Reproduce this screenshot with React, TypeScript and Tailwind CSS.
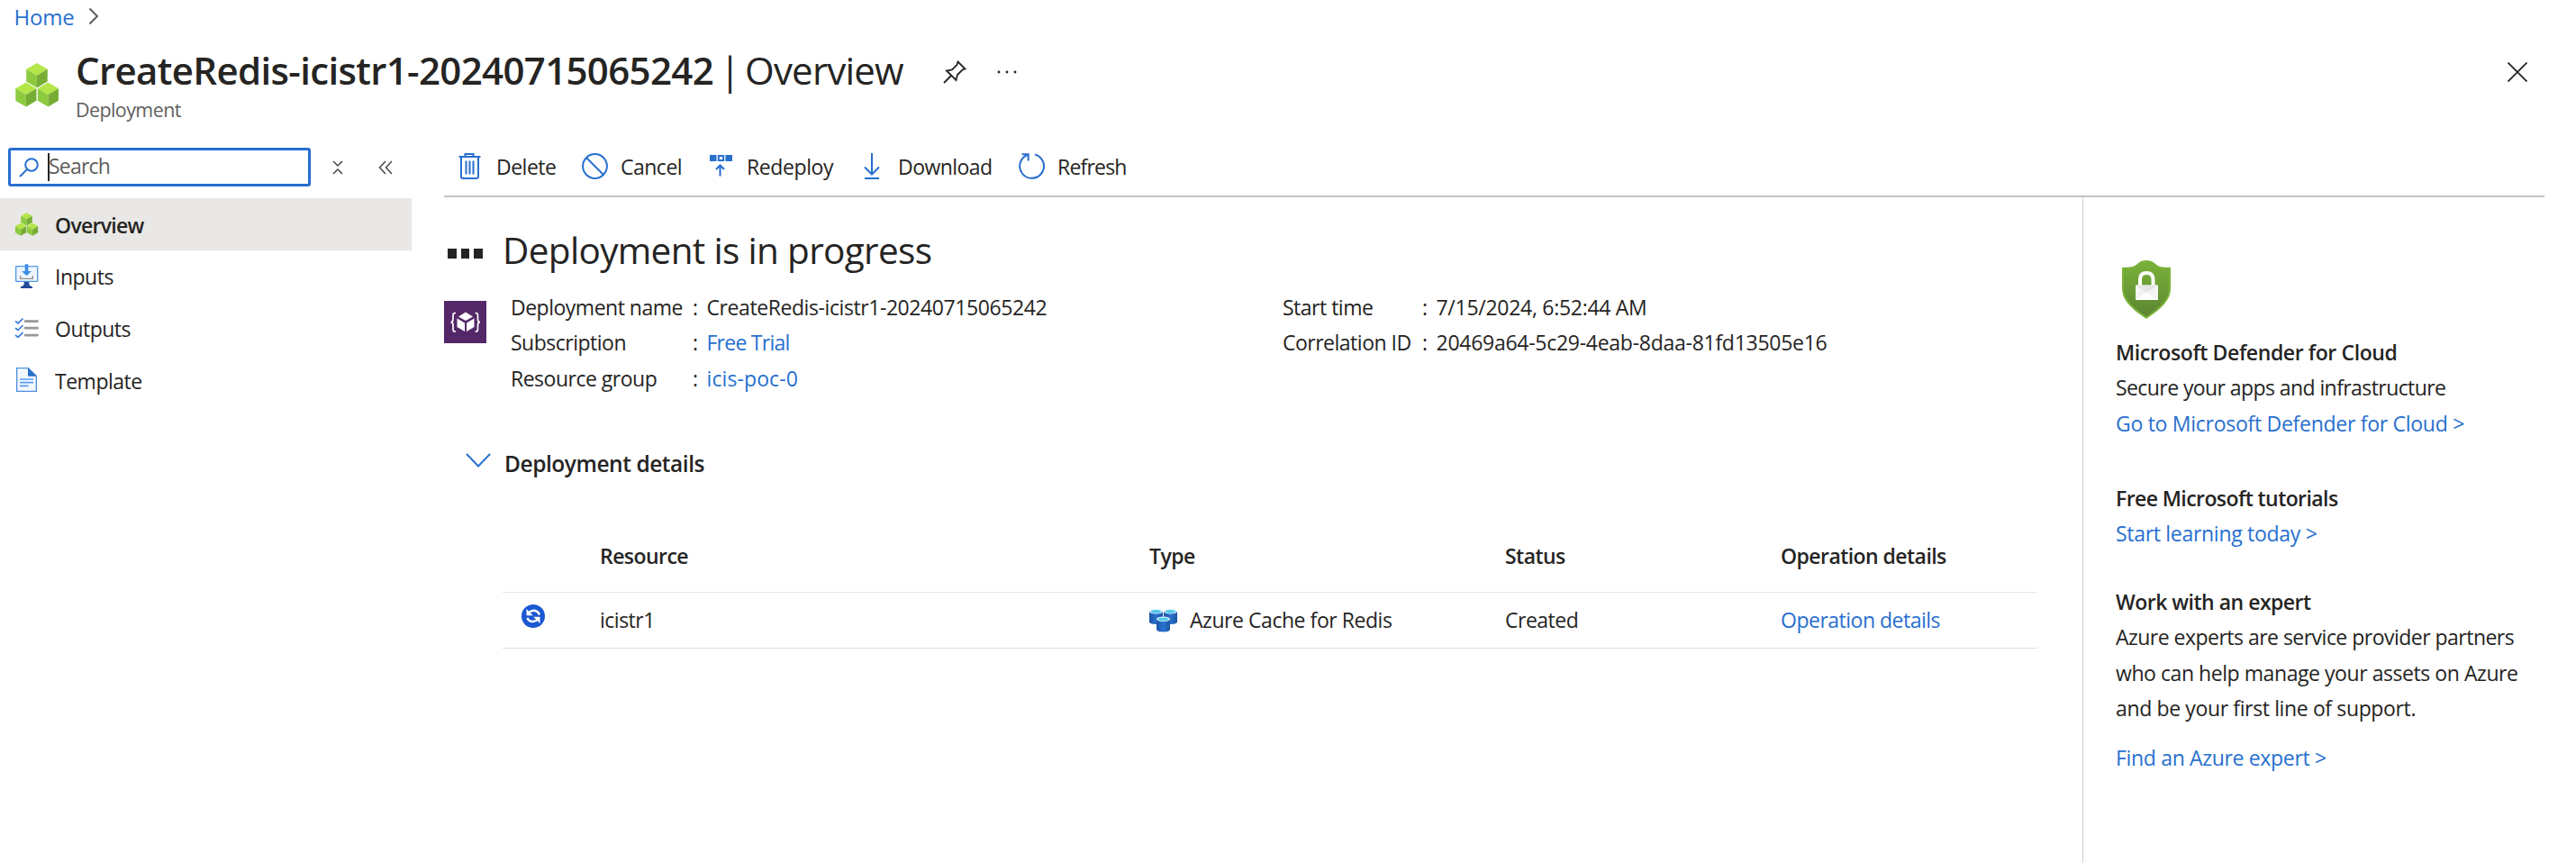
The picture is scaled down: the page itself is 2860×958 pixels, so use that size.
import type { ReactNode } from 'react';

function Cubes({ className }: { className: string }) {
  const cube = (
    <>
      <path d="M12 0 24 7 12 14 0 7Z" fill="#b4e648" />
      <path d="M0 7 12 14V28L0 21Z" fill="#8ccb40" />
      <path d="M24 7 12 14V28L24 21Z" fill="#77ad34" />
    </>
  );
  return (
    <svg viewBox="0 0 48 49" className={className}>
      <g transform="translate(12.2 0)scale(.98)">{cube}</g>
      <g transform="translate(.3 21.6)scale(.965)">{cube}</g>
      <g transform="translate(24.8 21.6)scale(.965)">{cube}</g>
    </svg>
  );
}

function InputsIcon() {
  return (
    <svg viewBox="48 252 81 84" className="h-7 w-[27px]">
      <rect x="53" y="260" width="72" height="50" rx="2" fill="#eef5fd" stroke="#4f9ae4" strokeWidth="4" />
      <path d="M83 253H94V276H105L88.500 292 72 276H83Z" fill="#3f8ee6" />
      <path d="M68 291V301H109V291" fill="none" stroke="#8f8f8f" strokeWidth="4" />
      <path d="M80 312H97V320Q98 325 108 328V333H69V328Q79 325 80 320Z" fill="#234b96" />
    </svg>
  );
}

function OutputsIcon() {
  return (
    <svg viewBox="48 426 81 76" className="h-[25px] w-[27px]">
      {[440, 463, 487].map((y) => (
        <g key={y} fill="none" strokeLinecap="round">
          <path d={`M52 ${y + 1}L60 ${y + 7}L75 ${y - 8}`} stroke="#3478d6" strokeWidth="5" />
          <path d={`M84 ${y}H125`} stroke="#979797" strokeWidth="8" />
        </g>
      ))}
    </svg>
  );
}

function TemplateIcon() {
  return (
    <svg viewBox="48 594 81 87" className="h-[29px] w-[27px]">
      <path d="M56 599H94L121 625V676H56Z" fill="#f3f8fe" stroke="#4f90de" strokeWidth="4" />
      <path d="M93 598 122 626H93Z" fill="#2a6fc9" />
      <path d="M66 636H111M66 647H111M66 658H95" stroke="#5a9bee" strokeWidth="5" />
    </svg>
  );
}

function ResourceIcon() {
  return (
    <svg viewBox="0 0 47 47" className="size-[47px] shrink-0">
      <path d="M0 0H47V47H0Z" fill="#542868" />
      <path d="M24 12.500 32 17.500 24 22 16 17.500Z M14.500 19.500 23 24.500V34L14.500 29Z M33.500 19.500 25 24.500V34L33.500 29Z" fill="#fff" />
      <path d="M13 13.500H12Q10 13.500 10 16V20.500Q10 23.700 7.500 23.700 10 23.700 10 27V31.500Q10 34 12 34H13M34.500 13.500H35.500Q37.500 13.500 37.500 16V20.500Q37.500 23.700 40 23.700 37.500 23.700 37.500 27V31.500Q37.500 34 35.500 34H34.500" fill="none" stroke="#fff" strokeWidth="1.700" />
    </svg>
  );
}

function RedisIcon() {
  const can = (x: number, y: number) => (
    <g transform={`translate(${x} ${y})`}>
      <path d="M0 2.500V14.500Q1 17 7.500 17T15 14.500V2.500Z" fill="url(#can)" />
      <ellipse cx="7.500" cy="2.800" rx="7.500" ry="2.800" fill="#e8f4fb" />
      <ellipse cx="7.500" cy="2.800" rx="5.800" ry="1.900" fill="#50c8ea" />
    </g>
  );
  return (
    <svg viewBox="0 0 31 26" className="h-[26px] w-[31px]">
      <defs>
        <linearGradient id="can">
          <stop offset="0" stopColor="#1b55a5" />
          <stop offset=".5" stopColor="#2a72cf" />
          <stop offset="1" stopColor="#1b55a5" />
        </linearGradient>
      </defs>
      {can(0, 0)}
      {can(16, 0)}
      {can(8, 8.500)}
    </svg>
  );
}

function SyncIcon() {
  return (
    <svg viewBox="0 0 26 26" className="size-[26px]">
      <circle cx="13" cy="13" r="13" fill="#1b57d2" />
      <path d="M8 9.500Q10.500 6.500 14 6.800 18.500 7.300 20 11.500M18 16.500Q15.500 19.300 12 19 7.800 18.500 6.500 14.800" fill="none" stroke="#fff" strokeWidth="2.400" />
      <path d="M5.500 5V12.300H12.800ZM20.500 21V13.700H13.200Z" fill="#fff" />
    </svg>
  );
}

function ShieldIcon() {
  return (
    <svg viewBox="0 0 54 65" className="h-[65px] w-[54px]">
      <defs>
        <linearGradient id="shield" x2="0" y2="1">
          <stop offset="0" stopColor="#7bb23a" />
          <stop offset="1" stopColor="#5b8530" />
        </linearGradient>
      </defs>
      <path d="M27 0C33 0 36 3 39 5.500 43 8 48 7.500 54 8V31C54 46 40 56 27 65 14 56 0 46 0 31V8C6 7.500 11 8 15 5.500 18 3 21 0 27 0Z" fill="#7ab338" />
      <path d="M27 1.500C33 1.500 35 4.500 38 6.700 42 9.500 47 9.500 52 9.800V31C52 44.500 39 54 27 62.500 15 54 2 44.500 2 31V9.800C7 9.500 12 9.500 16 6.700 19 4.500 21 1.500 27 1.500Z" fill="url(#shield)" />
      <path d="M20 28V21Q20 14 27.200 14T34.500 21V28" fill="none" stroke="#fff" strokeWidth="4" />
      <path d="M15 27.500H40V44H15Z" fill="#f4f4f4" />
      <path d="M15 27.500H40L27.500 36Z" fill="#e6e6e6" />
      <path d="M15 44 27.500 35.500 40 44Z" fill="#fff" />
    </svg>
  );
}

const line = 'fill-none stroke-[#276fcf] stroke-2';

const actions: { label: string; tracking: string; width: string; gap: string; icon: ReactNode }[] = [
  {
    label: 'Delete', tracking: 'tracking-[-0.5px]', width: 'w-[139px]', gap: 'gap-[15px]',
    icon: (
      <svg viewBox="0 0 29 29" className={`size-[29px] ${line}`}>
        <path d="M2.500 4H26.500M9.500 4V1H18.500V4M5 4V26Q5 28 7 28H22Q24 28 24 26V4M10.500 8.500V23.500M14.500 8.500V23.500M18.500 8.500V23.500" />
      </svg>
    ),
  },
  {
    label: 'Cancel', tracking: 'tracking-[-0.5px]', width: 'w-[142px]', gap: 'gap-3.5',
    icon: (
      <svg viewBox="0 0 29 29" className={`size-[29px] ${line}`}>
        <circle cx="14.500" cy="14.500" r="13.400" />
        <path d="M5 5 24 24" />
      </svg>
    ),
  },
  {
    label: 'Redeploy', tracking: 'tracking-[-0.4px]', width: 'w-[169px]', gap: 'gap-3',
    icon: (
      <svg viewBox="0 0 29 29" className={`size-[29px] ${line}`}>
        <path d="M0 2H7.500V9H0ZM17.500 2H25V9H17.500Z" className="fill-[#276fcf] stroke-none" />
        <path d="M9.800 3H15.200V8H9.800ZM11.500 25.500V14M7 18 11.500 13.500 16 18" />
      </svg>
    ),
  },
  {
    label: 'Download', tracking: 'tracking-[-0.55px]', width: 'w-[174px]', gap: 'gap-[11px]',
    icon: (
      <svg viewBox="0 0 29 29" className={`size-[29px] ${line}`}>
        <path d="M11 0V23M3 15.500 11 23.500 19 15.500M3 28H19" />
      </svg>
    ),
  },
  {
    label: 'Refresh', tracking: 'tracking-[-0.8px]', width: 'w-[160px]', gap: 'gap-3.5',
    icon: (
      <svg viewBox="0 0 29 29" className={`size-[29px] ${line}`}>
        <path d="M18 1.500A13.400 13.400 0 1 1 10.500 1.700M3.500 1.200H10.700V8.500" />
      </svg>
    ),
  },
];

const nav: { label: string; tracking: string; icon: ReactNode; active?: boolean }[] = [
  { label: 'Overview', tracking: 'tracking-[-0.7px]', icon: <Cubes className="h-[26px] w-[27px]" />, active: true },
  { label: 'Inputs', tracking: 'tracking-[-0.5px]', icon: <InputsIcon /> },
  { label: 'Outputs', tracking: 'tracking-[-0.5px]', icon: <OutputsIcon /> },
  { label: 'Template', tracking: 'tracking-[-0.5px]', icon: <TemplateIcon /> },
];

function Info({ label, labelWidth, children }: { label: string; labelWidth: string; children: ReactNode }) {
  return (
    <div className="flex h-[39.5px] items-center">
      <span className={`${labelWidth} tracking-[-0.5px]`}>{label}</span>
      <span className="w-[15.5px]">:</span>
      {children}
    </div>
  );
}

const cols = 'grid grid-cols-[108px_610px_395px_306px_1fr] items-center';

export default function App() {
  return (
    <div className="h-[958px] w-[2860px] overflow-hidden bg-white font-['Open_Sans',sans-serif] text-[23px] leading-[39.5px] whitespace-nowrap text-[#252423]">
      <header>
        <div className="flex h-9 items-center pl-[15.500px]">
          <a className="w-[67px] pt-px text-[24px] tracking-[-0.2px] text-[#276fcf]">Home</a>
          <svg viewBox="0 0 12 20" className="ml-[15px] h-5 w-3 fill-none stroke-[#605e5c] stroke-2">
            <path d="M1.500 1.500 10 10 1.500 18.500" />
          </svg>
        </div>
        <div className="flex h-[115px] items-start pl-[17px]">
          <Cubes className="mt-[34px] h-[49px] w-12" />
          <div className="mt-3.5 ml-[19px] w-[963px]">
            <h1 className="flex h-14 items-center text-[42px]">
              <span className="font-semibold tracking-[-0.65px]">CreateRedis-icistr1-20240715065242</span>
              <span className="ml-[7px] w-[28px]">|</span>
              <span className="tracking-[-0.8px]">Overview</span>
            </h1>
            <div className="h-[29px] pt-px text-[21.5px] leading-[29px] tracking-[-0.6px] text-[#605e5c]">Deployment</div>
          </div>
          <svg viewBox="0 0 26 26" className="mt-[31px] size-[26px] fill-none stroke-[#252423] stroke-[1.8]">
            <path d="M16.500 1.500 24.500 9.500 21.500 10.500 16 16 14.500 22 4 11.500 10 10.500 15.500 5ZM9 17 1 25" />
          </svg>
          <svg viewBox="0 0 22 4" className="mt-[42px] ml-[34px] h-1 w-[22px] fill-[#252423]">
            <circle cx="2" cy="2" r="1.400" />
            <circle cx="11" cy="2" r="1.400" />
            <circle cx="20" cy="2" r="1.400" />
          </svg>
          <svg viewBox="0 0 22 22" className="mt-[33px] mr-[54px] ml-auto size-[22px] stroke-[#252423] stroke-[1.800]">
            <path d="M.5.5 21.500 21.500M21.500.5.5 21.500" />
          </svg>
        </div>
      </header>

      <div className="flex h-[807px]">
        <aside className="mr-9 w-[457px] shrink-0 pt-[13px]">
          <div className="flex h-[43px] items-center pl-[9px]">
            <div className="flex h-[43px] w-[336px] items-center rounded-[3px] border-[3px] border-[#276fcf] pl-[9px]">
              <svg viewBox="0 0 22 22" className="size-[22px] fill-none stroke-[#276fcf] stroke-2">
                <circle cx="14" cy="8" r="6.800" />
                <path d="M9 13 1 21" />
              </svg>
              <span className="ml-2.5 h-[31px] w-0.5 bg-[#252423]" />
              <span className="-ml-px pb-px tracking-[-0.8px] text-[#605e5c]">Search</span>
            </div>
            <svg viewBox="0 0 12 16" className="ml-6 h-4 w-3 fill-none stroke-[#484644] stroke-[1.500]">
              <path d="M1 1 6 6 11 1M1 15 6 10 11 15" />
            </svg>
            <svg viewBox="0 0 16 16" className="ml-[39px] size-4 fill-none stroke-[#484644] stroke-[1.500]">
              <path d="M8 1 1.500 8 8 15M15 1 8.500 8 15 15" />
            </svg>
          </div>
          <nav className="mt-[13px]">
            {nav.map((n) => (
              <div key={n.label} className={`flex h-[57.7px] items-center pl-4 ${n.active ? 'bg-[#e9e8e6] font-semibold' : ''}`}>
                {n.icon}
                <span className={`ml-[18px] pt-[3px] ${n.tracking}`}>{n.label}</span>
              </div>
            ))}
          </nav>
        </aside>

        <div className="flex grow flex-col">
          <div className="mr-[35px] flex h-[68px] items-center border-b-2 border-[#c6c4c2] pl-3.5">
            {actions.map((a) => (
              <div key={a.label} className={`flex items-center ${a.width} ${a.gap}`}>
                {a.icon}
                <span className={`pt-1 ${a.tracking}`}>{a.label}</span>
              </div>
            ))}
          </div>

          <div className="flex grow">
            <main className="w-[1819px] shrink-0">
              <h2 className="mt-[39px] flex h-10 items-center text-[40.5px] tracking-[-0.67px]">
                <span className="mt-[7px] ml-1 flex w-[61px] gap-[5px]">
                  <i className="h-[11px] w-[9.500px] bg-[#252423]" />
                  <i className="h-[11px] w-[9.500px] bg-[#252423]" />
                  <i className="h-[11px] w-[9.500px] bg-[#252423]" />
                </span>
                Deployment is in progress
              </h2>
              <div className="mt-[23.5px] flex h-[119px]">
                <div className="mt-[12.500px] mr-[27px]">
                  <ResourceIcon />
                </div>
                <div className="w-[857px]">
                  <Info label="Deployment name" labelWidth="w-[202px]">
                    <span className="tracking-[-0.42px]">CreateRedis-icistr1-20240715065242</span>
                  </Info>
                  <Info label="Subscription" labelWidth="w-[202px]">
                    <a className="tracking-[-0.75px] text-[#276fcf]">Free Trial</a>
                  </Info>
                  <Info label="Resource group" labelWidth="w-[202px]">
                    <a className="tracking-[0.1px] text-[#276fcf]">icis-poc-0</a>
                  </Info>
                </div>
                <div>
                  <Info label="Start time" labelWidth="w-[155px]">
                    <span className="tracking-[-0.28px]">7/15/2024, 6:52:44 AM</span>
                  </Info>
                  <Info label="Correlation ID" labelWidth="w-[155px]">
                    <span className="tracking-[-0.27px]">20469a64-5c29-4eab-8daa-81fd13505e16</span>
                  </Info>
                </div>
              </div>
              <h3 className="mt-[54px] flex h-10 items-center pl-6 text-[24.5px] font-semibold tracking-[-0.45px]">
                <svg viewBox="0 0 28 16" className="mr-[15px] mb-[7px] h-4 w-7 fill-none stroke-[#276fcf] stroke-2">
                  <path d="M1 1 14 14.500 27 1" />
                </svg>
                Deployment details
              </h3>
              <div className="mt-[41.5px] ml-[65px] w-[1704px]">
                <div className={`${cols} h-[82px] border-b border-[#e8e6e4] pt-0.5 font-semibold tracking-[-0.55px]`}>
                  <span />
                  <span>Resource</span>
                  <span>Type</span>
                  <span>Status</span>
                  <span>Operation details</span>
                </div>
                <div className={`${cols} h-[62px] border-b border-[#e1dfdd] pt-px tracking-[-0.5px]`}>
                  <span className="pb-2.5 pl-[21px]">
                    <SyncIcon />
                  </span>
                  <span>icistr1</span>
                  <span className="flex items-center gap-3.5 tracking-[-0.45px]">
                    <RedisIcon />
                    Azure Cache for Redis
                  </span>
                  <span>Created</span>
                  <a className="text-[#276fcf]">Operation details</a>
                </div>
              </div>
            </main>

            <aside className="grow border-l border-[#d2d0ce] pt-[70px] pl-9">
              <div className="ml-[7px] h-[82.500px]">
                <ShieldIcon />
              </div>
              <h4 className="font-semibold tracking-[-0.4px]">Microsoft Defender for Cloud</h4>
              <p className="tracking-[-0.58px]">Secure your apps and infrastructure</p>
              <a className="block tracking-[-0.28px] text-[#276fcf]">Go to Microsoft Defender for Cloud &gt;</a>
              <h4 className="mt-[43.5px] font-semibold tracking-[-0.58px]">Free Microsoft tutorials</h4>
              <a className="block tracking-[-0.3px] text-[#276fcf]">Start learning today &gt;</a>
              <h4 className="mt-9 font-semibold tracking-[-0.5px]">Work with an expert</h4>
              <p className="tracking-[-0.52px]">Azure experts are service provider partners</p>
              <p className="tracking-[-0.44px]">who can help manage your assets on Azure</p>
              <p className="tracking-[-0.37px]">and be your first line of support.</p>
              <a className="mt-[15px] block tracking-[-0.33px] text-[#276fcf]">Find an Azure expert &gt;</a>
            </aside>
          </div>
        </div>
      </div>
    </div>
  );
}
